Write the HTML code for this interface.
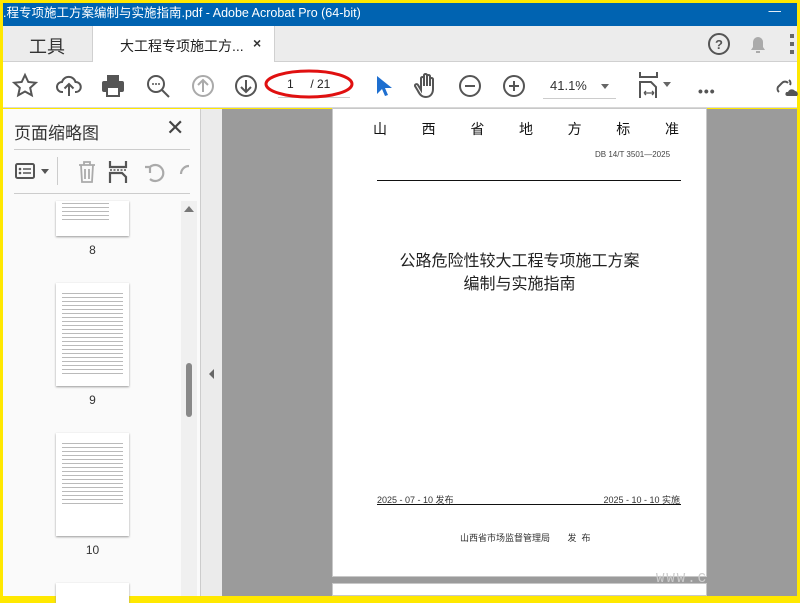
<!DOCTYPE html>
<html><head><meta charset="utf-8"><style>
*{margin:0;padding:0;box-sizing:border-box}
body{width:800px;height:600px;overflow:hidden;background:#ffe800;position:relative;font-family:"Liberation Sans","Noto Sans CJK SC",sans-serif}
.a{position:absolute}
.title{left:3px;top:3px;width:794px;height:23px;background:#0063b1;color:#fff;font-size:12.5px;line-height:20px;padding-left:0;white-space:nowrap;overflow:hidden}
.tabs{left:3px;top:26px;width:794px;height:36px;background:#ececec;border-bottom:1px solid #d0d0d0}
.tb{left:3px;top:62px;width:794px;height:46px;background:#fff;border-bottom:1px solid #d8d8d8}
.ic{stroke:#555;fill:none;stroke-width:2}
.panel{left:3px;top:109px;width:197px;height:487px;background:#fafafa}
.thumb{position:absolute;left:56px;width:73px;background:#fff;box-shadow:0 1px 2px #999}
.lines{position:absolute;left:6px;right:6px;top:8px;bottom:10px;background:repeating-linear-gradient(#fff 0,#fff 2px,#666 2px,#666 3px,#fff 3px,#fff 4px);opacity:.45}
.num{position:absolute;width:73px;left:56px;text-align:center;font-size:12px;color:#333}
.doc{left:222px;top:109px;width:575px;height:487px;background:#9b9b9b}
.page{left:332px;top:108px;width:375px;height:469px;background:#fff;border:1px solid #c8c8c8}
</style></head><body>
<div class="a title">.程专项施工方案编制与实施指南.pdf - Adobe Acrobat Pro (64-bit)<span style="position:absolute;right:16px;top:-2px">—</span></div>
<div class="a tabs">
 <div class="a" style="left:26px;top:7px;font-size:18px;color:#333">工具</div>
 <div class="a" style="left:89px;top:0;width:183px;height:36px;background:#fff;border-left:1px solid #d0d0d0;border-right:1px solid #d0d0d0"></div>
 <div class="a" style="left:117px;top:10px;font-size:14px;color:#222">大工程专项施工方...</div>
 <div class="a" style="left:250px;top:9px;font-size:14px;color:#333;font-weight:bold">×</div>
 <svg class="a" style="left:703px;top:5px" width="26" height="26"><circle cx="13" cy="13" r="10" class="ic"/><text x="13" y="18" font-size="13" text-anchor="middle" fill="#555" font-weight="bold" font-family="Liberation Sans">?</text></svg>
 <svg class="a" style="left:743px;top:6px" width="24" height="24"><path d="M5 18h14l-2-3V10a5 5 0 0 0-10 0v5z" fill="#aaa"/><rect x="10" y="19" width="4" height="2" fill="#aaa"/></svg>
 <div class="a" style="left:787px;top:8px;width:4px;height:20px;background:repeating-linear-gradient(#666 0,#666 4px,transparent 4px,transparent 8px)"></div>
</div>
<div class="a tb">
 <svg class="a" style="left:8px;top:10px" width="28" height="28"><path d="M14 3l3.3 7 7.5.8-5.6 5 1.6 7.5L14 19.5 7.2 23.3l1.6-7.5-5.6-5 7.5-.8z" class="ic" stroke-width="1.6"/></svg>
 <svg class="a" style="left:52px;top:10px" width="28" height="28"><path d="M8 20H7a5 5 0 0 1 0-10 7 7 0 0 1 13.5 0A5 5 0 0 1 21 20h-1M14 24V12M9.5 16.5 14 12l4.5 4.5" class="ic" stroke-width="2.2"/></svg>
 <svg class="a" style="left:96px;top:10px" width="28" height="28"><rect x="8" y="3" width="12" height="6" fill="#555"/><rect x="3" y="9" width="22" height="11" rx="2" fill="#555"/><rect x="8" y="15" width="12" height="9" fill="#fff" stroke="#555" stroke-width="2"/></svg>
 <svg class="a" style="left:141px;top:10px" width="28" height="28"><circle cx="12" cy="12" r="8" class="ic" stroke-width="2.2"/><path d="M18 18l7 7" class="ic" stroke-width="3"/><circle cx="9" cy="12" r="1" fill="#555"/><circle cx="12" cy="12" r="1" fill="#555"/><circle cx="15" cy="12" r="1" fill="#555"/></svg>
 <svg class="a" style="left:186px;top:10px" width="28" height="28"><circle cx="14" cy="14" r="10" stroke="#aaa" fill="none" stroke-width="2"/><path d="M14 20V8M9 13l5-5 5 5" stroke="#aaa" fill="none" stroke-width="2"/></svg>
 <svg class="a" style="left:229px;top:10px" width="28" height="28"><circle cx="14" cy="14" r="10" class="ic"/><path d="M14 8v12M9 15l5 5 5-5" class="ic"/></svg>
 <div class="a" style="left:275px;top:7px;width:72px;height:29px;border-bottom:1px solid #ccc"></div>
 <div class="a" style="left:284px;top:15px;font-size:12px;color:#222">1&nbsp;&nbsp;&nbsp;&nbsp;&nbsp;/ 21</div>
 <svg class="a" style="left:260px;top:4px" width="94" height="36"><ellipse cx="46" cy="18" rx="43" ry="13" fill="none" stroke="#e01010" stroke-width="3"/></svg>
 <svg class="a" style="left:368px;top:10px" width="24" height="28"><path d="M6 4v18l5-5 3 7 3-1-3-7h7z" fill="#1e6fd0"/></svg>
 <svg class="a" style="left:409px;top:8px" width="28" height="30"><path d="M9 20V8a1.6 1.6 0 0 1 3 0v8V5a1.6 1.6 0 0 1 3 0v11V6a1.6 1.6 0 0 1 3 0v10V9a1.6 1.6 0 0 1 3 0v10c0 5-3 8-7 8s-6-2-8-6l-3-5a1.6 1.6 0 0 1 3-1z" class="ic" stroke-width="1.6"/></svg>
 <svg class="a" style="left:453px;top:10px" width="28" height="28"><circle cx="14" cy="14" r="10" class="ic"/><path d="M9 14h10" class="ic"/></svg>
 <svg class="a" style="left:497px;top:10px" width="28" height="28"><circle cx="14" cy="14" r="10" class="ic"/><path d="M9 14h10M14 9v10" class="ic"/></svg>
 <div class="a" style="left:540px;top:7px;width:73px;height:30px;border-bottom:1px solid #ccc"></div>
 <div class="a" style="left:547px;top:16px;font-size:13px;color:#333">41.1%</div>
 <div class="a" style="left:598px;top:22px;border:4px solid transparent;border-top:5px solid #666"></div>
 <svg class="a" style="left:634px;top:8px" width="24" height="30"><path d="M3 2v5h17V2M3 28V12h11l5 5v11" class="ic" stroke-width="2.2"/><path d="M7 23h10M7 23l2-2M7 23l2 2M17 23l-2-2M17 23l-2 2" stroke="#555" stroke-width="1.3" fill="none"/></svg>
 <div class="a" style="left:660px;top:20px;border:4px solid transparent;border-top:5px solid #666"></div>
 <div class="a" style="left:695px;top:21px;font-size:14px;color:#555;letter-spacing:1px;font-weight:bold">•••</div>
 <svg class="a" style="left:768px;top:10px" width="28" height="28"><path d="M8 20a4 4 0 0 1-1-5l4-4a4 4 0 0 1 6 0M18 8a4 4 0 0 1 1 5" class="ic" stroke-width="2.2"/><path d="M16 24h10a3 3 0 0 0-2-5 4 4 0 0 0-7 1 2 2 0 0 0-1 4z" fill="#555"/></svg>
</div>
<div class="a panel">
 <div class="a" style="left:11px;top:10px;font-size:17px;color:#333">页面缩略图</div>
 <div class="a" style="left:163px;top:6px;font-size:22px;color:#444">✕</div>
 <div class="a" style="left:11px;top:40px;width:176px;height:1px;background:#ccc"></div>
 <svg class="a" style="left:11px;top:52px" width="24" height="20"><rect x="2" y="3" width="18" height="14" rx="1.5" class="ic"/><circle cx="6" cy="8" r="1.3" fill="#555"/><circle cx="6" cy="12" r="1.3" fill="#555"/><path d="M9 8h8M9 12h8" stroke="#555" stroke-width="1.6"/></svg>
 <div class="a" style="left:38px;top:60px;border:4px solid transparent;border-top:5px solid #555"></div>
 <div class="a" style="left:54px;top:48px;width:1px;height:28px;background:#ccc"></div>
 <svg class="a" style="left:72px;top:50px" width="24" height="26"><path d="M4 6h16M9 6V3h6v3M6 6l1 17h10l1-17M10 10v10M14 10v10" stroke="#aaa" fill="none" stroke-width="1.8"/></svg>
 <svg class="a" style="left:104px;top:50px" width="24" height="26"><path d="M3 2v6h16V2M3 24V14h12l4 4v6" stroke="#555" fill="none" stroke-width="2.2"/><path d="M3 11h16" stroke="#555" stroke-dasharray="2 1.5" stroke-width="1.5"/></svg>
 <svg class="a" style="left:139px;top:52px" width="24" height="24"><path d="M8 18a8 8 0 1 0 0-12M8 6v6M8 6H3" stroke="#aaa" fill="none" stroke-width="2.2"/></svg>
 <svg class="a" style="left:172px;top:52px" width="16" height="24"><path d="M14 5a8 8 0 0 0-8 8" stroke="#aaa" fill="none" stroke-width="2.2"/></svg>
 <div class="a" style="left:11px;top:84px;width:176px;height:1px;background:#ccc"></div>
 <div class="a" style="left:178px;top:92px;width:16px;height:395px;background:#f0f0f0"></div>
 <div class="a" style="left:181px;top:97px;border:5px solid transparent;border-bottom:6px solid #777;border-top:0"></div>
 <div class="a" style="left:183px;top:254px;width:6px;height:54px;border-radius:3px;background:#888"></div>
 <div class="thumb" style="top:92px;height:35px;left:53px"><div class="lines" style="top:0;bottom:16px;right:20px"></div></div>
 <div class="num" style="top:134px;left:53px">8</div>
 <div class="thumb" style="top:174px;height:103px;left:53px"><div class="lines"></div></div>
 <div class="num" style="top:284px;left:53px">9</div>
 <div class="thumb" style="top:324px;height:103px;left:53px"><div class="lines" style="bottom:30px"></div></div>
 <div class="num" style="top:434px;left:53px">10</div>
 <div class="thumb" style="top:474px;height:20px;left:53px"></div>
</div>
<div class="a" style="left:200px;top:109px;width:22px;height:487px;background:#ebebeb;border-left:1px solid #ccc"></div>
<div class="a" style="left:209px;top:369px;border:5px solid transparent;border-right:5px solid #666;border-left:0"></div>
<div class="a doc"></div>
<div class="a page">
 <div class="a" style="left:40px;top:10px;width:306px;display:flex;justify-content:space-between;font-size:14px;color:#111"><span>山</span><span>西</span><span>省</span><span>地</span><span>方</span><span>标</span><span>准</span></div>
 <div class="a" style="left:262px;top:41px;font-size:8px;color:#444">DB 14/T 3501—2025</div>
 <div class="a" style="left:44px;top:71px;width:304px;height:1px;background:#111"></div>
 <div class="a" style="left:0;width:373px;top:141px;text-align:center;font-size:16px;line-height:23px;color:#222">公路危险性较大工程专项施工方案<br>编制与实施指南</div>
 <div class="a" style="left:44px;top:384px;font-size:9px;color:#333">2025 - 07 - 10 发布</div>
 <div class="a" style="right:26px;top:384px;font-size:9px;color:#333">2025 - 10 - 10 实施</div>
 <div class="a" style="left:44px;top:395px;width:304px;height:1px;background:#111"></div>
 <div class="a" style="left:127px;top:422px;font-size:9px;color:#333">山西省市场监督管理局&nbsp;&nbsp;&nbsp;&nbsp;&nbsp;&nbsp;&nbsp;发&nbsp;&nbsp;布</div>
</div>
<div class="a" style="left:332px;top:583px;width:375px;height:13px;background:#fff;border:1px solid #c8c8c8"></div>
<div class="a" style="left:656px;top:571px;font-size:14px;color:#ccc;letter-spacing:2px;font-family:'Liberation Mono',monospace">WWW.C</div>
</body></html>
